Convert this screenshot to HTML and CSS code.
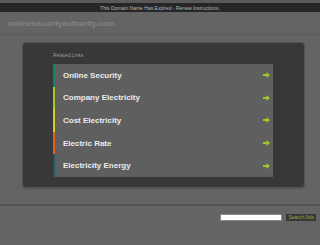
FILE: index.html
```
<!DOCTYPE html>
<html lang="en">

<head>
    <meta charset="UTF-8">
    <meta name="viewport" content="width=device-width, initial-scale=1.0">
    <title>onlinesecurityauthority.com</title>
    <link rel="stylesheet" href="styles.css">
</head>

<body>
    <div class="topbar">
        <a href="#">This Domain Name Has Expired - Renew Instructions.</a>
    </div>

    <header class="domain">
        <h1>onlinesecurityauthority.com</h1>
    </header>

    <!-- Links relacionados -->
    <div class="panel">
        <h2>Related Links</h2>
        <ul class="links">
            <li class="c1"><a href="#">Online Security</a><span class="arrow"><svg width="7" height="6" viewBox="0 0 7 6"><path d="M0 2h3.5V0L7 3 3.5 6V4H0z" fill="#9ccb1d"/></svg></span></li>
            <li class="c2"><a href="#">Company Electricity</a><span class="arrow"><svg width="7" height="6" viewBox="0 0 7 6"><path d="M0 2h3.5V0L7 3 3.5 6V4H0z" fill="#9ccb1d"/></svg></span></li>
            <li class="c3"><a href="#">Cost Electricity</a><span class="arrow"><svg width="7" height="6" viewBox="0 0 7 6"><path d="M0 2h3.5V0L7 3 3.5 6V4H0z" fill="#9ccb1d"/></svg></span></li>
            <li class="c4"><a href="#">Electric Rate</a><span class="arrow"><svg width="7" height="6" viewBox="0 0 7 6"><path d="M0 2h3.5V0L7 3 3.5 6V4H0z" fill="#9ccb1d"/></svg></span></li>
            <li class="c5"><a href="#">Electricity Energy</a><span class="arrow"><svg width="7" height="6" viewBox="0 0 7 6"><path d="M0 2h3.5V0L7 3 3.5 6V4H0z" fill="#9ccb1d"/></svg></span></li>
        </ul>
    </div>

    <div class="footer">
        <form class="search">
            <input type="text">
            <button type="button">Search Ads</button>
        </form>
    </div>
</body>

</html>
```

FILE: styles.css
```
body {
    margin: 0;
    font-family: "Liberation Sans", Arial, sans-serif;
    background-color: #646464;
}

.topbar {
    border-top: 3px solid #5a5a5a;
    background-color: #262626;
    height: 9px;
    display: flex;
    justify-content: center;
    align-items: center;
}

.topbar a {
    color: #b8b8b8;
    font-size: 5px;
    text-decoration: none;
}

.domain {
    height: 22px;
    border-bottom: 1px solid #5b5b5b;
    display: flex;
    align-items: center;
    padding-left: 8px;
}

.domain h1 {
    margin: 0;
    font-size: 8px;
    font-weight: bold;
    color: #838383;
}

.panel {
    margin: 7px 0 0 22px;
    width: 283px;
    height: 146px;
    box-sizing: border-box;
    background-color: #383838;
    border: 1px solid #545454;
    border-radius: 4px;
    box-shadow: 0 1px 1px #555;
    padding: 9px 31px 0 30px;
}

.panel h2 {
    margin: 0 0 6px;
    font-size: 5px;
    font-weight: normal;
    color: #9a9a9a;
}

.links {
    list-style: none;
    margin: 0;
    padding: 0;
    background-color: #5f5f5f;
}

.links li {
    height: 22.6px;
    display: flex;
    align-items: center;
    justify-content: space-between;
    border-left: 2px solid #16806a;
    padding: 0 3px 0 8px;
}

.links li.c2 { border-left-color: #a9c91b; }
.links li.c3 { border-left-color: #dccf1c; }
.links li.c4 { border-left-color: #e06512; }
.links li.c5 { border-left-color: #1b5668; }

.links a {
    color: #ececec;
    font-size: 8px;
    font-weight: bold;
    text-decoration: none;
}

.arrow {
    display: flex;
}

.footer {
    margin-top: 16px;
    border-top: 2px solid #525252;
    box-shadow: 0 1px 0 #6c6c6c;
    padding-top: 8px;
}

.search {
    display: flex;
    justify-content: flex-end;
    gap: 4px;
    padding-right: 4px;
}

.search input {
    width: 62px;
    height: 7px;
    box-sizing: border-box;
    margin: 0;
    padding: 0;
    border: 1px solid #888;
    background-color: #fff;
}

.search button {
    height: 7px;
    padding: 0 2px;
    margin: 0;
    border: none;
    background-color: #383838;
    color: #98a64a;
    font-family: "Liberation Sans", Arial, sans-serif;
    font-size: 5px;
    line-height: 7px;
}
```
